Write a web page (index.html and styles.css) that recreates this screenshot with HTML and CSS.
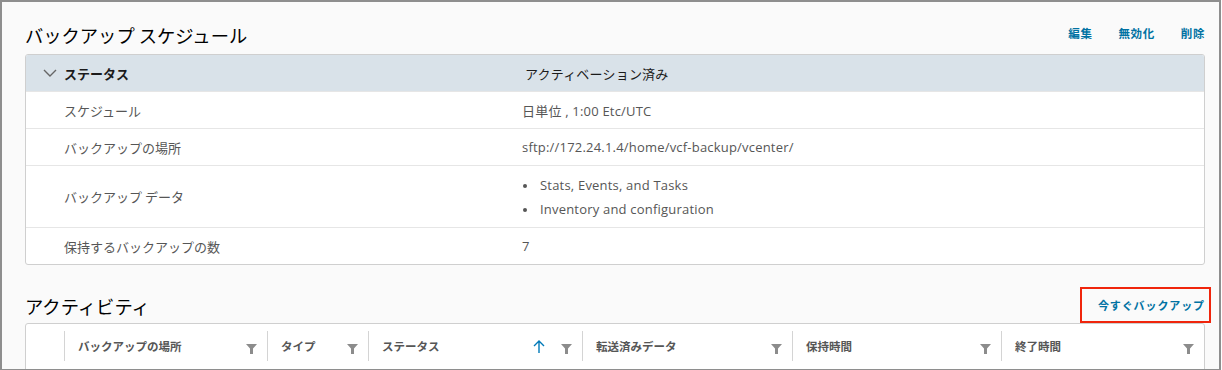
FILE: index.html
```html
<!DOCTYPE html>
<html lang="ja">
<head>
  <meta charset="UTF-8">
  <title>バックアップ スケジュール</title>
  <link rel="stylesheet" href="styles.css">
</head>
<body>
<div class="frame">
  <div class="section-head">
    <h2>バックアップ スケジュール</h2>
    <div class="actions">
      <a href="#">編集</a>
      <a href="#">無効化</a>
      <a href="#">削除</a>
    </div>
  </div>

  <div class="card">
    <div class="row head">
      <div class="label">
        <svg class="chevron" width="14" height="8" viewBox="0 0 14 8"><path d="M1 1l6 6 6-6" fill="none" stroke="#666" stroke-width="1.4"/></svg>
        ステータス
      </div>
      <div class="value">アクティベーション済み</div>
    </div>
    <div class="row">
      <div class="label">スケジュール</div>
      <div class="value">日単位 , 1:00 Etc/UTC</div>
    </div>
    <div class="row">
      <div class="label">バックアップの場所</div>
      <div class="value">sftp://172.24.1.4/home/vcf-backup/vcenter/</div>
    </div>
    <div class="row tall">
      <div class="label">バックアップ データ</div>
      <ul class="value list">
        <li>Stats, Events, and Tasks</li>
        <li>Inventory and configuration</li>
      </ul>
    </div>
    <div class="row">
      <div class="label">保持するバックアップの数</div>
      <div class="value">7</div>
    </div>
  </div>

  <div class="section-head activity">
    <h2>アクティビティ</h2>
    <button class="backup-now">今すぐバックアップ</button>
  </div>

  <div class="grid">
    <div class="cell first"></div>
    <div class="cell"><span>バックアップの場所</span><svg class="filter" width="11" height="10" viewBox="0 0 11 10"><path d="M0 0h11L7 4.5V10H4V4.5z" fill="#8c8c8c"/></svg></div>
    <div class="cell"><span>タイプ</span><svg class="filter" width="11" height="10" viewBox="0 0 11 10"><path d="M0 0h11L7 4.5V10H4V4.5z" fill="#8c8c8c"/></svg></div>
    <div class="cell"><span>ステータス</span>
      <svg class="sort" width="12" height="13" viewBox="0 0 12 13"><path d="M6 13V1M1 6l5-5 5 5" fill="none" stroke="#0079b8" stroke-width="1.4"/></svg>
      <svg class="filter" width="11" height="10" viewBox="0 0 11 10"><path d="M0 0h11L7 4.5V10H4V4.5z" fill="#8c8c8c"/></svg></div>
    <div class="cell"><span>転送済みデータ</span><svg class="filter" width="11" height="10" viewBox="0 0 11 10"><path d="M0 0h11L7 4.5V10H4V4.5z" fill="#8c8c8c"/></svg></div>
    <div class="cell"><span>保持時間</span><svg class="filter" width="11" height="10" viewBox="0 0 11 10"><path d="M0 0h11L7 4.5V10H4V4.5z" fill="#8c8c8c"/></svg></div>
    <div class="cell"><span>終了時間</span><svg class="filter" width="11" height="10" viewBox="0 0 11 10"><path d="M0 0h11L7 4.5V10H4V4.5z" fill="#8c8c8c"/></svg></div>
  </div>
</div>
</body>
</html>
```

FILE: styles.css
```css
body {
  margin: 0;
  font-family: "Open Sans", "Noto Sans CJK JP", sans-serif;
  background-color: #fff;
  color: #565656;
}

.frame {
  width: 1180px;
  height: 367px;
  border: 2px solid #8e8e8e;
  background-color: #fafafa;
  padding: 0 14px 0 23px;
  overflow: hidden;
}

.section-head {
  display: flex;
  align-items: flex-end;
  justify-content: space-between;
  height: 52px;
}

.section-head h2 {
  margin: 0 0 7px;
  font-family: "Noto Sans CJK JP", sans-serif;
  font-size: 18.3px;
  font-weight: 400;
  color: #000;
  line-height: 24px;
}

.actions {
  display: flex;
  gap: 26px;
  margin-bottom: 13px;
}

.actions a {
  font-family: "Noto Sans CJK JP", sans-serif;
  font-size: 11.5px;
  font-weight: 700;
  color: #0072a3;
  text-decoration: none;
  letter-spacing: 0.6px;
}

.card {
  border: 1px solid #cfcfcf;
  border-radius: 3px;
  background-color: #fff;
  overflow: hidden;
}

.row {
  display: grid;
  grid-template-columns: 496px 1fr;
  align-items: center;
  box-sizing: border-box;
  height: 37px;
  border-top: 1px solid #e6e6e6;
  font-size: 13px;
}

.row.head {
  border-top: none;
  background-color: #d9e2e9;
  height: 36px;
  color: #1b1b1b;
  font-weight: 700;
}

.row.head .label {
  padding-left: 17px;
  display: flex;
  align-items: center;
  gap: 7px;
  font-family: "Noto Sans CJK JP", sans-serif;
}

.row.head .value {
  padding-left: 3px;
  font-weight: 400;
  font-family: "Noto Sans CJK JP", sans-serif;
}

.row.tall {
  height: 62px;
}

.label {
  padding-left: 38px;
  font-family: "Noto Sans CJK JP", sans-serif;
}

.value {
  letter-spacing: 0.2px;
}

.list {
  margin: 0;
  padding: 0 0 0 18px;
  list-style: none;
}

.list li {
  position: relative;
  line-height: 24px;
}

.list li::before {
  content: "";
  position: absolute;
  left: -17px;
  top: 11px;
  width: 4px;
  height: 4px;
  border-radius: 50%;
  background-color: #565656;
}

.activity {
  height: 58px;
}

.activity h2 {
  margin-bottom: 5px;
}

.backup-now {
  font-family: "Noto Sans CJK JP", sans-serif;
  font-size: 11px;
  font-weight: 700;
  color: #0072a3;
  letter-spacing: 0.9px;
  background: none;
  border: 2px solid #f0250c;
  padding: 0 4px 0 16px;
  height: 36px;
  margin-right: -6px;
}

.grid {
  display: grid;
  grid-template-columns: 38px 203px 101px 214px 210px 209px 1fr;
  height: 50px;
  border: 1px solid #cfcfcf;
  border-radius: 3px 3px 0 0;
  background-color: #fff;
}

.cell {
  display: flex;
  align-items: center;
  padding: 0 10px 0 13px;
  margin: 7px 0 13px;
  border-left: 1px solid #d4d4d4;
  font-family: "Noto Sans CJK JP", sans-serif;
  font-size: 11.5px;
  font-weight: 700;
  color: #565656;
}

.cell.first {
  border-left: none;
}

.cell span {
  flex: 1;
}

.filter {
  margin-top: 6px;
}

.sort {
  margin-right: 16px;
}
```
